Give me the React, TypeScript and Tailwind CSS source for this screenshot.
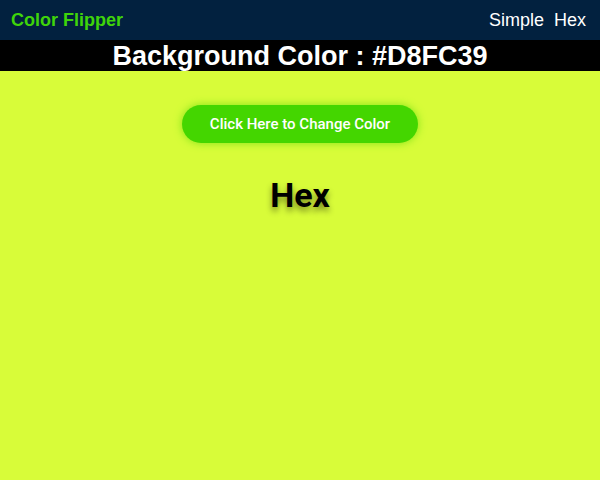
export default function App() {
  return (
    <div className="min-h-[480px] bg-[#D8FC39]" style={{ fontFamily: '"Liberation Sans", Arial, sans-serif' }}>
      <nav className="h-10 bg-[#02213f] flex items-center justify-between px-[11px]">
        <span className="text-[18px] font-bold text-[#3fd40a]">Color Flipper</span>
        <div className="flex gap-[10px] text-[18px] text-white pr-[3px]">
          <span>Simple</span>
          <span>Hex</span>
        </div>
      </nav>
      <div className="h-[31px] bg-black flex items-center justify-center">
        <h2 className="text-[27px] font-bold text-white leading-none pt-[1px]">Background Color : #D8FC39</h2>
      </div>
      <div className="flex flex-col items-center">
        <button
          className="mt-[34px] w-[236px] h-[38px] rounded-full bg-[#44d600] text-white text-[15px] font-medium shadow-[0_0_8px_rgba(68,214,0,0.6)]"
          style={{ fontFamily: 'Roboto, sans-serif' }}
        >
          Click Here to Change Color
        </button>
        <h1
          className="mt-[35px] text-[34px] font-bold text-black leading-none [text-shadow:0_4px_6px_rgba(0,0,0,0.45)]"
          style={{ fontFamily: 'Roboto, sans-serif' }}
        >
          Hex
        </h1>
      </div>
    </div>
  )
}
